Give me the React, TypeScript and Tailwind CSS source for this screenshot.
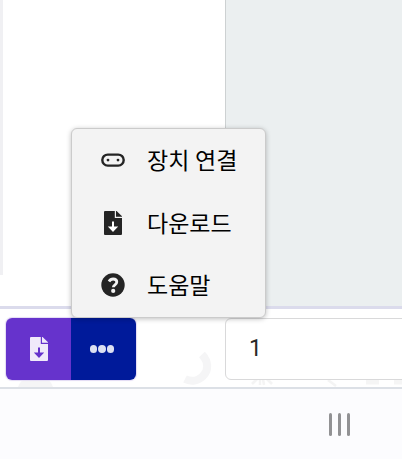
import React from 'react';

const FileDownloadIcon: React.FC<{ className?: string; arrow: string }> = ({ className, arrow }) => (
  <svg viewBox="0 0 18 24" className={className} fill="currentColor">
    <path d="M1 0H10.8V6.9H18V23a1 1 0 0 1-1 1H1a1 1 0 0 1-1-1V1a1 1 0 0 1 1-1Z" />
    <path d="M12 0.1h.6L18 5.3v.5h-6Z" />
    <path d="M8 10.4h2v5.2h4.2L9 20.9l-5.2-5.3H8Z" fill={arrow} />
  </svg>
);

const BoardIcon: React.FC = () => (
  <svg viewBox="0 0 24 14" className="h-[14px] w-6">
    <rect x="1.3" y="1.6" width="21.4" height="11" rx="5.5" fill="none" stroke="#242424" strokeWidth="2.4" />
    <circle cx="7" cy="7.1" r="1.4" fill="#242424" />
    <circle cx="17" cy="7.1" r="1.4" fill="#242424" />
  </svg>
);

const HelpIcon: React.FC = () => (
  <svg viewBox="0 0 24 24" className="h-6 w-6">
    <circle cx="12" cy="12" r="11.7" fill="#242424" />
    <path d="M8 8.5c1-1.7 2.4-2.5 4.1-2.5 2.2 0 3.7 1.3 3.7 3.1 0 2.7-3.5 2.7-3.5 5.1" fill="none" stroke="#f3f3f3" strokeWidth="2.8" />
    <circle cx="12.2" cy="17.9" r="2.1" fill="#f3f3f3" />
  </svg>
);

const menuItems = [
  { label: '장치 연결', icon: <BoardIcon /> },
  { label: '다운로드', icon: <FileDownloadIcon className="h-6 w-[18px] text-[#242424]" arrow="#fff" /> },
  { label: '도움말', icon: <HelpIcon /> },
];

const Menu: React.FC = () => (
  <div className="absolute bottom-[69px] left-[71px] h-[190px] w-[195px] rounded-md border border-[#cbcbcb] bg-[#f3f3f3] shadow-[0_1px_5px_rgba(0,0,0,0.25)]">
    {menuItems.map(({ label, icon }) => (
      <div key={label} className="flex h-[62.6px] items-center pl-[29.4px] text-[23px] text-black">
        <span className="mr-[21.6px] flex w-6 justify-center">{icon}</span>
        <span className="pt-1 whitespace-nowrap">{label}</span>
      </div>
    ))}
  </div>
);

// Faint doodles behind the toolbar
const Pattern: React.FC = () => (
  <svg viewBox="0 0 402 78" className="absolute inset-0 h-[78px] w-[402px]" fill="none">
    <path d="M18 78q3-9 12-9h12q8 0 11 9Z" fill="#f5f5f6" />
    <path d="M202 45.5C209 53 208.5 62 203 67C198 72 191 73 185 70" stroke="#f5f5f6" strokeWidth="8" />
    <path d="M252 75l5-5M260 76v-6M272 75l-5-5M264 76l-1-6M328 71l8 6" stroke="#f4f4f4" strokeWidth="2.5" />
    <path d="M366 72h13M394 72h13" stroke="#f5f5f5" strokeWidth="7" />
  </svg>
);

const App: React.FC = () => {
  return (
    <div className="flex h-[459px] w-[402px] flex-col overflow-hidden bg-white font-['Roboto','Noto_Sans_CJK_KR',sans-serif]">
      <main className="flex h-[306px]">
        <div className="h-[275px] w-[3px] bg-[#f0f0f3]" />
        <div className="w-[222px] bg-white" />
        <div className="flex-1 border-l border-[#cdd1d2] bg-[#ebeff0]" />
      </main>

      <div className="relative flex h-[83px] border-t-[3px] border-b-2 border-t-[#dbdbec] border-b-[#dce0e6] bg-white">
        <Pattern />
        <div className="relative mt-[9px] ml-[6px] flex h-[62px] w-[130px] shrink-0 overflow-hidden rounded-md shadow-[0_0_1px_1px_#e3dbf4]">
          <button className="flex w-[65px] items-center justify-center bg-[#6633cc] pl-[1px]">
            <FileDownloadIcon className="h-6 w-[18px] text-[#f0eafa]" arrow="#6633cc" />
          </button>
          <button className="flex w-[65px] items-center justify-center gap-[1.3px] bg-[#001a9a] pr-[3px]">
            <span className="h-[7.2px] w-[7.2px] rounded-full bg-[#dce0f2]" />
            <span className="h-[7.2px] w-[7.2px] rounded-full bg-[#dce0f2]" />
            <span className="h-[7.2px] w-[7.2px] rounded-full bg-[#dce0f2]" />
          </button>
        </div>
        <div className="relative mt-[9px] ml-[89px] flex h-[62px] w-[240px] shrink-0 items-center rounded-md border border-[#d9d9da] bg-white pl-[23px] text-[23px] text-[#282828]">
          1
        </div>
        <Menu />
      </div>

      <footer className="flex h-[70px] justify-end bg-[#fcfcfe] pr-[52px]">
        <div className="mt-[24px] flex h-[23px] gap-[6px]">
          <span className="w-[3px] rounded-full bg-[#929294]" />
          <span className="w-[3px] rounded-full bg-[#929294]" />
          <span className="w-[3px] rounded-full bg-[#929294]" />
        </div>
      </footer>
    </div>
  );
};

export default App;
